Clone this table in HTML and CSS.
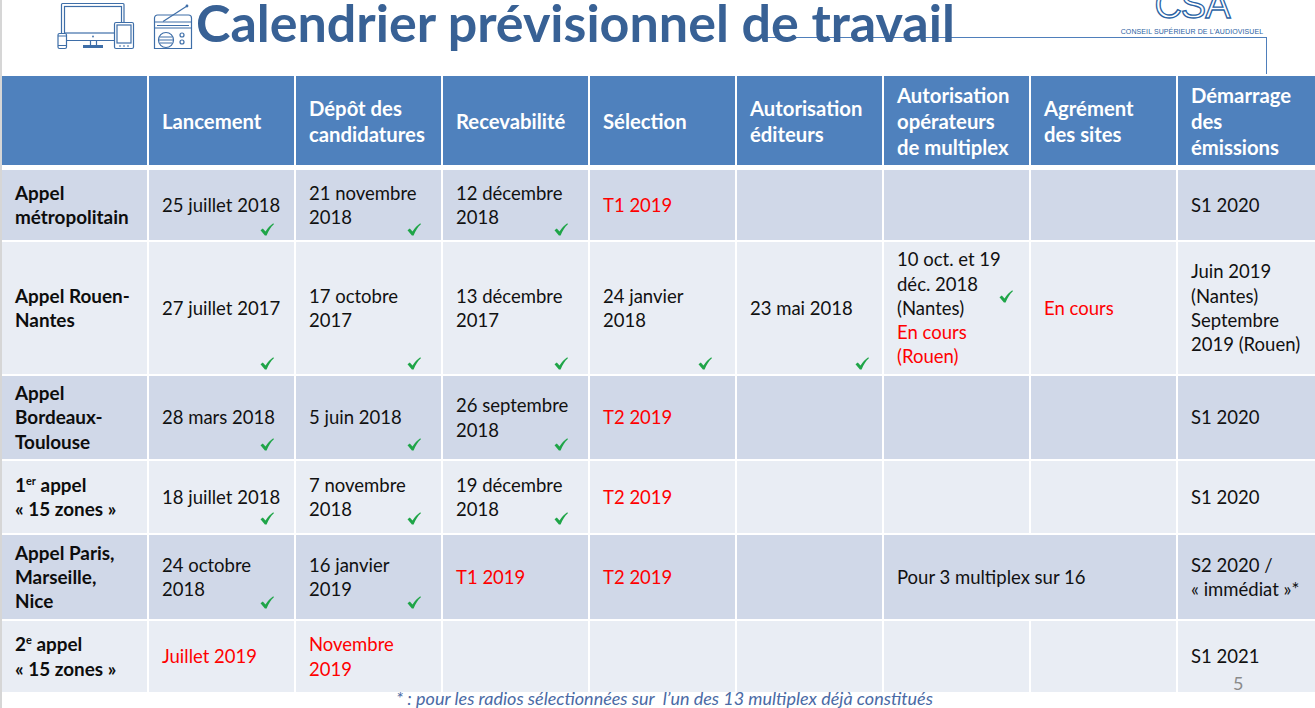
FILE: index.html
```html
<!DOCTYPE html>
<html lang="fr">
<head>
<meta charset="utf-8">
<title>Calendrier prévisionnel de travail</title>
<link rel="stylesheet" href="styles.css">
</head>
<body>
<div class="slide">
  <header class="top">
    <svg class="devices" viewBox="0 0 80 50" width="80" height="50" fill="none" stroke="#3e6ea8" stroke-width="1.2">
      <rect x="6.5" y="3.5" width="62.5" height="37" rx="1"/>
      <rect x="9.5" y="6.5" width="57" height="26.5"/>
      <circle cx="38" cy="36.5" r="0.9" fill="#3e6ea8" stroke="none"/>
      <path d="M35.5 40.5v4.5M41.5 40.5v4.5"/>
      <rect x="28" y="45" width="20" height="3" fill="#3e6ea8" stroke="none"/>
      <rect x="3" y="33.5" width="8.5" height="15" rx="1.5" fill="#fff"/>
      <path d="M3 36h8.5M3 45.5h8.5"/>
      <rect x="59.5" y="22.5" width="19" height="26" rx="1.5" fill="#fff"/>
      <rect x="62" y="25" width="14" height="18"/>
      <path d="M64 46h2M68 46h2M72 46h2"/>
    </svg>
    <svg class="radio" viewBox="0 0 42 50" width="42" height="50" fill="none" stroke="#3e6ea8" stroke-width="1.2">
      <path d="M11 21.5L35 6"/>
      <circle cx="35" cy="6" r="0.8" fill="#3e6ea8"/>
      <path d="M2.5 18a3 3 0 0 1 3-3h31a3 3 0 0 1 3 3v30.5h-37z"/>
      <path d="M2.5 22h37M5 25.5h32M2.5 28h37"/>
      <circle cx="14" cy="40" r="7.5"/>
      <path d="M8 37h12M7 40h14M8 43h12"/>
      <circle cx="30" cy="35" r="2"/>
      <circle cx="30" cy="42" r="2"/>
    </svg>
    <h1 class="title">Calendrier prévisionnel de travail</h1>
    <div class="logo">
      <div class="csa">CSA</div>
      <div class="csa-sub">CONSEIL SUPÉRIEUR DE L'AUDIOVISUEL</div>
    </div>
    <div class="rule"></div>
  </header>

  <div class="grid head">
    <div class="th"></div>
    <div class="th"><span>Lancement</span></div>
    <div class="th"><span>Dépôt des<br>candidatures</span></div>
    <div class="th"><span>Recevabilité</span></div>
    <div class="th"><span>Sélection</span></div>
    <div class="th"><span>Autorisation<br>éditeurs</span></div>
    <div class="th"><span>Autorisation<br>opérateurs<br>de multiplex</span></div>
    <div class="th"><span>Agrément<br>des sites</span></div>
    <div class="th"><span>Démarrage<br>des<br>émissions</span></div>
  </div>

  <div class="grid body">
    <!-- row 1 -->
    <div class="td dark lab"><span>Appel<br>métropolitain</span></div>
    <div class="td dark"><span>25 juillet 2018</span><svg class="ck b4" viewBox="0 0 14 13"><path d="M0.5 7.2L2.8 5.6l2.7 3C7.8 5 10.3 2.3 13.3 0.3l0.6 1C11 3.8 8.6 7.5 6.6 12.5H4.9z"/></svg></div>
    <div class="td dark"><span>21 novembre<br>2018</span><svg class="ck b4" viewBox="0 0 14 13"><path d="M0.5 7.2L2.8 5.6l2.7 3C7.8 5 10.3 2.3 13.3 0.3l0.6 1C11 3.8 8.6 7.5 6.6 12.5H4.9z"/></svg></div>
    <div class="td dark"><span>12 décembre<br>2018</span><svg class="ck b4" viewBox="0 0 14 13"><path d="M0.5 7.2L2.8 5.6l2.7 3C7.8 5 10.3 2.3 13.3 0.3l0.6 1C11 3.8 8.6 7.5 6.6 12.5H4.9z"/></svg></div>
    <div class="td dark red"><span>T1 2019</span></div>
    <div class="td dark"></div>
    <div class="td dark"></div>
    <div class="td dark"></div>
    <div class="td dark"><span>S1 2020</span></div>

    <!-- row 2 -->
    <div class="td light lab"><span>Appel Rouen-<br>Nantes</span></div>
    <div class="td light"><span>27 juillet 2017</span><svg class="ck b4" viewBox="0 0 14 13"><path d="M0.5 7.2L2.8 5.6l2.7 3C7.8 5 10.3 2.3 13.3 0.3l0.6 1C11 3.8 8.6 7.5 6.6 12.5H4.9z"/></svg></div>
    <div class="td light"><span>17 octobre<br>2017</span><svg class="ck b4" viewBox="0 0 14 13"><path d="M0.5 7.2L2.8 5.6l2.7 3C7.8 5 10.3 2.3 13.3 0.3l0.6 1C11 3.8 8.6 7.5 6.6 12.5H4.9z"/></svg></div>
    <div class="td light"><span>13 décembre<br>2017</span><svg class="ck b4" viewBox="0 0 14 13"><path d="M0.5 7.2L2.8 5.6l2.7 3C7.8 5 10.3 2.3 13.3 0.3l0.6 1C11 3.8 8.6 7.5 6.6 12.5H4.9z"/></svg></div>
    <div class="td light"><span>24 janvier<br>2018</span><svg class="ck b4 r22" viewBox="0 0 14 13"><path d="M0.5 7.2L2.8 5.6l2.7 3C7.8 5 10.3 2.3 13.3 0.3l0.6 1C11 3.8 8.6 7.5 6.6 12.5H4.9z"/></svg></div>
    <div class="td light"><span>23 mai 2018</span><svg class="ck b4 r12" viewBox="0 0 14 13"><path d="M0.5 7.2L2.8 5.6l2.7 3C7.8 5 10.3 2.3 13.3 0.3l0.6 1C11 3.8 8.6 7.5 6.6 12.5H4.9z"/></svg></div>
    <div class="td light"><span>10 oct. et 19<br>déc. 2018<br>(Nantes)<br><em class="redtxt">En cours<br>(Rouen)</em></span><svg class="ck mid" viewBox="0 0 14 13"><path d="M0.5 7.2L2.8 5.6l2.7 3C7.8 5 10.3 2.3 13.3 0.3l0.6 1C11 3.8 8.6 7.5 6.6 12.5H4.9z"/></svg></div>
    <div class="td light red"><span>En cours</span></div>
    <div class="td light"><span>Juin 2019<br>(Nantes)<br>Septembre<br>2019 (Rouen)</span></div>

    <!-- row 3 -->
    <div class="td dark lab"><span>Appel<br>Bordeaux-<br>Toulouse</span></div>
    <div class="td dark"><span>28 mars 2018</span><svg class="ck b8" viewBox="0 0 14 13"><path d="M0.5 7.2L2.8 5.6l2.7 3C7.8 5 10.3 2.3 13.3 0.3l0.6 1C11 3.8 8.6 7.5 6.6 12.5H4.9z"/></svg></div>
    <div class="td dark"><span>5 juin 2018</span><svg class="ck b8" viewBox="0 0 14 13"><path d="M0.5 7.2L2.8 5.6l2.7 3C7.8 5 10.3 2.3 13.3 0.3l0.6 1C11 3.8 8.6 7.5 6.6 12.5H4.9z"/></svg></div>
    <div class="td dark"><span>26 septembre<br>2018</span><svg class="ck b8" viewBox="0 0 14 13"><path d="M0.5 7.2L2.8 5.6l2.7 3C7.8 5 10.3 2.3 13.3 0.3l0.6 1C11 3.8 8.6 7.5 6.6 12.5H4.9z"/></svg></div>
    <div class="td dark red"><span>T2 2019</span></div>
    <div class="td dark"></div>
    <div class="td dark"></div>
    <div class="td dark"></div>
    <div class="td dark"><span>S1 2020</span></div>

    <!-- row 4 -->
    <div class="td light lab"><span>1<sup>er</sup> appel<br>« 15 zones »</span></div>
    <div class="td light"><span>18 juillet 2018</span><svg class="ck b8" viewBox="0 0 14 13"><path d="M0.5 7.2L2.8 5.6l2.7 3C7.8 5 10.3 2.3 13.3 0.3l0.6 1C11 3.8 8.6 7.5 6.6 12.5H4.9z"/></svg></div>
    <div class="td light"><span>7 novembre<br>2018</span><svg class="ck b8" viewBox="0 0 14 13"><path d="M0.5 7.2L2.8 5.6l2.7 3C7.8 5 10.3 2.3 13.3 0.3l0.6 1C11 3.8 8.6 7.5 6.6 12.5H4.9z"/></svg></div>
    <div class="td light"><span>19 décembre<br>2018</span><svg class="ck b8" viewBox="0 0 14 13"><path d="M0.5 7.2L2.8 5.6l2.7 3C7.8 5 10.3 2.3 13.3 0.3l0.6 1C11 3.8 8.6 7.5 6.6 12.5H4.9z"/></svg></div>
    <div class="td light red"><span>T2 2019</span></div>
    <div class="td light"></div>
    <div class="td light"></div>
    <div class="td light"></div>
    <div class="td light"><span>S1 2020</span></div>

    <!-- row 5 -->
    <div class="td dark lab"><span>Appel Paris,<br>Marseille,<br>Nice</span></div>
    <div class="td dark"><span>24 octobre<br>2018</span><svg class="ck b10" viewBox="0 0 14 13"><path d="M0.5 7.2L2.8 5.6l2.7 3C7.8 5 10.3 2.3 13.3 0.3l0.6 1C11 3.8 8.6 7.5 6.6 12.5H4.9z"/></svg></div>
    <div class="td dark"><span>16 janvier<br>2019</span><svg class="ck b10" viewBox="0 0 14 13"><path d="M0.5 7.2L2.8 5.6l2.7 3C7.8 5 10.3 2.3 13.3 0.3l0.6 1C11 3.8 8.6 7.5 6.6 12.5H4.9z"/></svg></div>
    <div class="td dark red"><span>T1 2019</span></div>
    <div class="td dark red"><span>T2 2019</span></div>
    <div class="td dark"></div>
    <div class="td dark span2"><span>Pour 3 multiplex sur 16</span></div>
    <div class="td dark"><span>S2 2020 /<br>« immédiat »*</span></div>

    <!-- row 6 -->
    <div class="td light lab"><span>2<sup>e</sup> appel<br>« 15 zones »</span></div>
    <div class="td light red"><span>Juillet 2019</span></div>
    <div class="td light red"><span>Novembre<br>2019</span></div>
    <div class="td light"></div>
    <div class="td light"></div>
    <div class="td light"></div>
    <div class="td light"></div>
    <div class="td light"></div>
    <div class="td light"><span>S1 2021</span></div>
  </div>

  <p class="note">* : pour les radios sélectionnées sur&nbsp; l’un des 13 multiplex déjà constitués</p>
  <div class="pagenum">5</div>
</div>
</body>
</html>
```

FILE: styles.css
```css
html, body {
  margin: 0;
  padding: 0;
  overflow: hidden;
  background: #ffffff;
}

.slide {
  position: relative;
  width: 1325px;
  height: 708px;
  border-left: 2px solid #d6d6d6;
  font-family: Lato, "Open Sans", sans-serif;
  color: #111111;
}

/* ---------- header ---------- */
.top {
  position: relative;
  height: 76px;
  display: flex;
  align-items: flex-start;
}

.devices {
  margin-left: 53px;
  flex: none;
}

.radio {
  margin-left: 17px;
  flex: none;
}

.title {
  margin: -3px 0 0 2px;
  font-size: 52px;
  line-height: 50px;
  font-weight: 700;
  color: #386195;
  white-space: nowrap;
  position: relative;
  z-index: 1;
}

.logo {
  margin-left: auto;
  margin-right: 62px;
  width: 146px;
  text-align: center;
  color: #2a62a3;
}

.csa {
  font-family: "Liberation Sans", Arial, sans-serif;
  font-size: 38px;
  line-height: 38px;
  margin-top: -14px;
  letter-spacing: -1px;
  color: transparent;
  -webkit-text-stroke: 1.3px #2a62a3;
}

.csa-sub {
  font-family: "Liberation Sans", Arial, sans-serif;
  font-size: 7px;
  line-height: 8px;
  margin-top: 4px;
  white-space: nowrap;
  letter-spacing: 0.1px;
}

.rule {
  position: absolute;
  left: 763px;
  top: 37px;
  width: 501px;
  height: 36px;
  border-top: 1px solid #4f7fbb;
  border-right: 1px solid #4f7fbb;
}

/* ---------- table grid ---------- */
.grid {
  display: grid;
  grid-template-columns: repeat(9, 145px);
  column-gap: 2px;
}

.head {
  height: 89px;
  margin-bottom: 5px;
}

.th {
  background: #4f81bd;
  color: #ffffff;
  font-weight: 700;
  font-size: 20.3px;
  line-height: 26px;
  display: flex;
  align-items: center;
  padding: 0 4px 0 13px;
  white-space: nowrap;
}

.body {
  grid-template-rows: 70px 132px 83px 72px 84px 71px;
  row-gap: 2px;
}

.td {
  position: relative;
  display: flex;
  align-items: center;
  padding: 0 6px 0 13px;
  font-size: 18.5px;
  line-height: 24.3px;
  white-space: nowrap;
  color: #111111;
}

.dark { background: #d0d8e8; }
.light { background: #e9edf4; }

.lab {
  font-weight: 700;
  font-size: 18.9px;
  color: #0d0d0d;
}

.red, .redtxt { color: #ff0000; }
.redtxt { font-style: normal; }

.span2 { grid-column: span 2; }

sup {
  font-size: 11px;
  line-height: 0;
  vertical-align: 7px;
}

/* check marks */
.ck {
  position: absolute;
  right: 20px;
  width: 14px;
  height: 13px;
  fill: #1fa548;
}
.b4 { bottom: 4px; }
.b8 { bottom: 8px; }
.b10 { bottom: 10px; }
.r22 { right: 23px; }
.r12 { right: 13px; }
.mid { top: 48px; right: 16px; }

/* ---------- footnote ---------- */
.note {
  margin: -4px 0 0;
  text-align: center;
  font-style: italic;
  font-size: 18px;
  line-height: 20px;
  color: #4a6aa5;
  white-space: nowrap;
}

.pagenum {
  position: absolute;
  left: 1231px;
  top: 672px;
  font-size: 18px;
  line-height: 22px;
  color: #8a8a8a;
}
```
